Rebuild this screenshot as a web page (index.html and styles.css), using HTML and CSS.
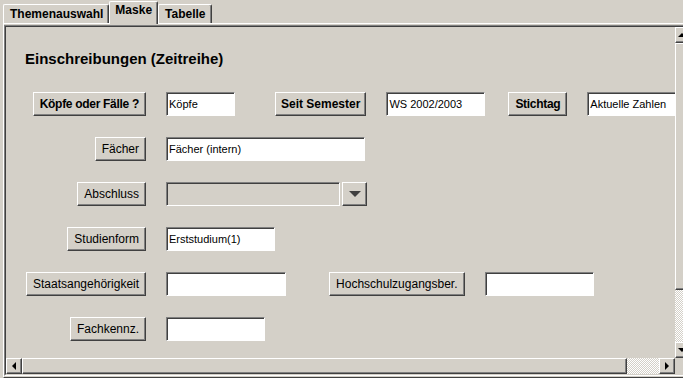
FILE: index.html
```html
<!DOCTYPE html>
<html lang="de">
<head>
    <meta charset="UTF-8">
    <title>Einschreibungen (Zeitreihe)</title>
    <link rel="stylesheet" href="styles.css">
</head>
<body>

    <div class="tabs">
        <div class="tab">Themenauswahl</div>
        <div class="tab active">Maske</div>
        <div class="tab">Tabelle</div>
    </div>

    <div class="frame">
        <div class="scroll">
            <div class="scroll-in">
                <div class="view">
                    <h1 class="title">Einschreibungen (Zeitreihe)</h1>

                    <div class="row">
                        <div class="label"><button class="btn bold tight">Köpfe oder Fälle ?</button></div>
                        <input class="field w69" value="Köpfe">
                        <button class="btn bold narrow ml40">Seit Semester</button>
                        <input class="field w99 ml20" value="WS 2002/2003">
                        <button class="btn bold tight ml24">Stichtag</button>
                        <input class="field w100 ml20" value="Aktuelle Zahlen">
                    </div>

                    <div class="row">
                        <div class="label"><button class="btn">Fächer</button></div>
                        <input class="field w199" value="Fächer (intern)">
                    </div>

                    <div class="row">
                        <div class="label"><button class="btn">Abschluss</button></div>
                        <div class="combo">
                            <div class="combo-field"></div>
                            <div class="combo-btn"><span class="arr-down big"></span></div>
                        </div>
                    </div>

                    <div class="row">
                        <div class="label"><button class="btn">Studienform</button></div>
                        <input class="field w109" value="Erststudium(1)">
                    </div>

                    <div class="row">
                        <div class="label"><button class="btn">Staatsangehörigkeit</button></div>
                        <input class="field w120" value="">
                        <button class="btn ml43">Hochschulzugangsber.</button>
                        <input class="field w109 ml20" value="">
                    </div>

                    <div class="row">
                        <div class="label"><button class="btn">Fachkennz.</button></div>
                        <input class="field w99" value="">
                    </div>
                </div>

                <div class="vbar">
                    <div class="sb-btn"><span class="arr-up"></span></div>
                    <div class="thumb vthumb"></div>
                    <div class="track"></div>
                    <div class="sb-btn"><span class="arr-down"></span></div>
                </div>

                <div class="hbar">
                    <div class="sb-btn"><span class="arr-left"></span></div>
                    <div class="thumb hthumb"></div>
                    <div class="track"></div>
                    <div class="sb-btn"><span class="arr-right"></span></div>
                </div>

                <div class="corner"></div>
            </div>
        </div>
    </div>

</body>
</html>
```

FILE: styles.css
```css
body {
    margin: 0;
    width: 683px;
    height: 378px;
    overflow: hidden;
    background-color: #d4d0c8;
    font-family: "Liberation Sans", Arial, sans-serif;
    font-size: 12px;
    color: #000;
}

/* tab strip */
.tabs {
    display: flex;
    align-items: flex-end;
    height: 23px;
    padding-left: 3px;
    box-sizing: border-box;
}

.tab {
    height: 19px;
    line-height: 19px;
    padding: 0 5px 0 6px;
    border-top: 1px solid #fff;
    border-left: 1px solid #fff;
    border-right: 1px solid #404040;
    border-radius: 2px 2px 0 0;
    box-shadow: inset -1px 0 #808080;
    box-sizing: border-box;
    font-weight: bold;
}

.tab.active {
    position: relative;
    height: 23px;
    margin-bottom: -1px;
    padding: 0 5px 4px;
    line-height: 17px;
    background-color: #d4d0c8;
}

/* tab content */
.frame {
    width: 720px;
    height: 355px;
    margin-left: 3px;
    padding: 1px 0;
    border-top: 1px solid #fff;
    border-left: 1px solid #fff;
    border-bottom: 1px solid #404040;
    box-sizing: border-box;
}

.scroll {
    border: 1px solid;
    border-color: #808080 #fff #fff #808080;
}

.scroll-in {
    display: grid;
    grid-template-columns: 669px 16px;
    grid-template-rows: 331px 16px;
    border: 1px solid;
    border-color: #404040 #d4d0c8 #d4d0c8 #404040;
}

.view {
    overflow: hidden;
    padding-top: 23px;
}

.title {
    margin: 0 0 25px 19px;
    font-size: 15px;
    line-height: 17px;
    font-weight: bold;
}

.row {
    display: flex;
    align-items: center;
    height: 24px;
    margin-bottom: 21px;
    padding-left: 20px;
}

.label {
    display: flex;
    justify-content: flex-end;
    flex: 0 0 120px;
    margin-right: 20px;
}

/* controls */
.btn, .sb-btn, .thumb, .combo-btn {
    background-color: #d4d0c8;
    border: 1px solid;
    border-color: #fff #404040 #404040 #fff;
    box-shadow: inset -1px -1px #808080;
    box-sizing: border-box;
}

.btn {
    flex: 0 0 auto;
    height: 24px;
    margin: 0;
    padding: 0 6px;
    font-family: inherit;
    font-size: 12px;
    color: #000;
}

.bold {
    font-weight: bold;
}

.tight {
    letter-spacing: -0.3px;
}

.narrow {
    padding: 0 5px;
}

.field, .combo-field {
    flex: 0 0 auto;
    height: 24px;
    margin: 0;
    padding: 0 2px;
    border: 1px solid;
    border-color: #808080 #fff #fff #808080;
    box-shadow: inset 1px 1px #404040;
    box-sizing: border-box;
    background-color: #fff;
    font-family: inherit;
    font-size: 11px;
    color: #000;
    outline: none;
}

.w69 { width: 69px; }
.w99 { width: 99px; }
.w100 { width: 100px; }
.w109 { width: 109px; }
.w120 { width: 120px; }
.w199 { width: 199px; }

.ml20 { margin-left: 20px; }
.ml24 { margin-left: 23px; }
.ml40 { margin-left: 40px; }
.ml43 { margin-left: 43px; }

.combo {
    display: flex;
    gap: 2px;
}

.combo-field {
    width: 174px;
    background-color: #d4d0c8;
}

.combo-btn {
    display: flex;
    align-items: center;
    justify-content: center;
    width: 25px;
    height: 24px;
}

/* scroll bars */
.vbar, .hbar {
    display: flex;
}

.vbar {
    flex-direction: column;
}

.sb-btn {
    display: flex;
    align-items: center;
    justify-content: center;
    flex: 0 0 16px;
    width: 16px;
    height: 16px;
}

.vbar .sb-btn {
    padding-right: 2px;
}

.vthumb {
    flex: 0 0 247px;
}

.hthumb {
    flex: 0 0 605px;
}

.track {
    flex: 1;
    background: repeating-conic-gradient(#fff 0 25%, #d4d0c8 0 50%) 0 0 / 2px 2px;
}

.corner {
    background-color: #d4d0c8;
}

.arr-up, .arr-down, .arr-left, .arr-right {
    width: 0;
    height: 0;
    border-style: solid;
    border-color: transparent;
}

.arr-up {
    border-width: 0 4px 4px;
    border-bottom-color: #000;
}

.arr-down {
    border-width: 4px 4px 0;
    border-top-color: #000;
}

.arr-down.big {
    border-width: 6px 6px 0;
    border-top-color: #404040;
}

.arr-left {
    border-width: 4px 4px 4px 0;
    border-right-color: #000;
}

.arr-right {
    border-width: 4px 0 4px 4px;
    border-left-color: #000;
}
```
